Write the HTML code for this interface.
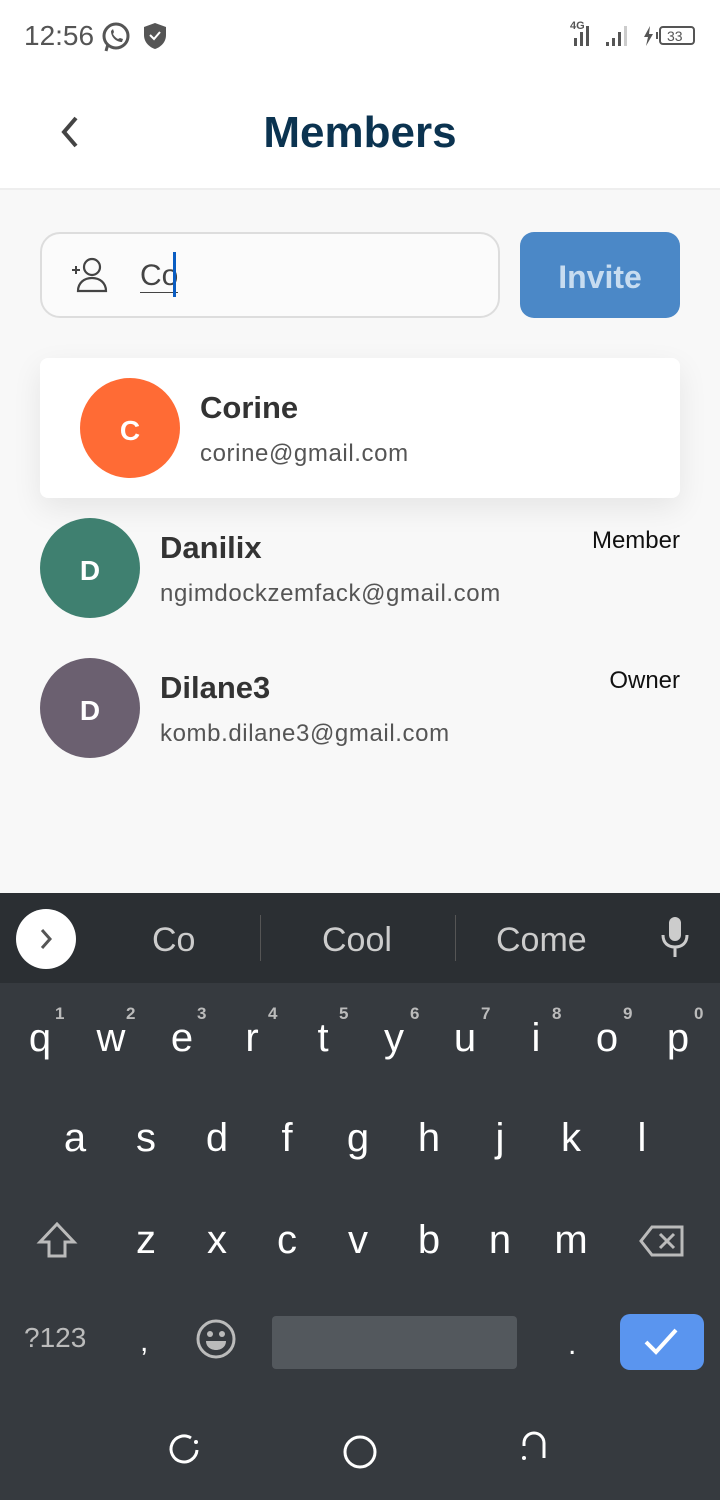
<!DOCTYPE html>
<html><head><meta charset="utf-8"><style>
*{margin:0;padding:0;box-sizing:border-box}
body{width:720px;height:1500px;position:relative;overflow:hidden;font-family:"Liberation Sans",sans-serif;background:#f8f8f8}
.a{position:absolute}
.kb{position:absolute;left:0;top:893px;width:720px;height:607px;background:#363a3f}
.sug{position:absolute;left:0;top:0;width:720px;height:90px;background:#2b2f33}
.k{position:absolute;color:#fff;font-size:40px;width:60px;text-align:center;transform:translateX(-30px);font-family:"Liberation Sans",sans-serif}
.n{position:absolute;color:#bbb;font-size:17px;font-weight:bold}
.av{position:absolute;width:100px;height:100px;border-radius:50%;color:#fff;font-weight:bold;font-size:28px;text-align:center;line-height:100px}
.nm{position:absolute;font-size:31px;font-weight:bold;color:#333}
.em{position:absolute;font-size:24px;color:#555;letter-spacing:0.6px}
</style></head><body>
<div class="a" style="left:0;top:0;width:720px;height:190px;background:#fff;border-bottom:2px solid #eee"></div>
<div class="a" style="left:24px;top:20px;font-size:28px;color:#555">12:56</div>
<svg class="a" style="left:100px;top:21px" width="32" height="32" viewBox="0 0 32 32"><circle cx="16" cy="15" r="12" fill="none" stroke="#555" stroke-width="3"/><path d="M6 30l2-7" stroke="#555" stroke-width="3"/><path d="M11 10c0 6 5 11 11 11l1-3-3-1-2 1c-2-1-4-3-5-5l1-2-1-3z" fill="#555"/></svg>
<svg class="a" style="left:142px;top:22px" width="26" height="28" viewBox="0 0 26 28"><path d="M13 1l11 4v8c0 7-5 12-11 14C7 25 2 20 2 13V5z" fill="#555"/><path d="M8 13l4 4 6-7" stroke="#fff" stroke-width="2" fill="none"/></svg>
<div class="a" style="left:570px;top:20px;font-size:11px;color:#555;font-weight:bold">4G</div>
<svg class="a" style="left:570px;top:24px" width="130" height="24" viewBox="0 0 130 24"><rect x="4" y="14" width="3" height="8" fill="#555"/><rect x="10" y="8" width="3" height="14" fill="#555"/><rect x="16" y="2" width="3" height="20" fill="#555"/><rect x="36" y="18" width="3" height="4" fill="#555"/><rect x="42" y="14" width="3" height="8" fill="#555"/><rect x="48" y="8" width="3" height="14" fill="#555"/><rect x="54" y="2" width="3" height="20" fill="#ccc"/><path d="M80 2l-6 11h4l-2 9 7-12h-4z" fill="#555"/><rect x="86" y="8" width="2" height="7" fill="#555"/><rect x="90" y="3" width="34" height="17" rx="3" fill="none" stroke="#555" stroke-width="2"/><text x="97" y="17" font-size="14" fill="#555" font-family="Liberation Sans">33</text></svg>
<svg class="a" style="left:58px;top:115px" width="24" height="34" viewBox="0 0 24 34"><path d="M18 3L6 17l12 14" stroke="#444" stroke-width="4" fill="none"/></svg>
<div class="a" style="left:0;width:720px;top:108px;text-align:center;font-size:44px;font-weight:bold;color:#0b3350">Members</div>
<div class="a" style="left:40px;top:232px;width:460px;height:86px;border:2px solid #ddd;border-radius:20px;background:#fbfbfb"></div>
<svg class="a" style="left:70px;top:255px" width="42" height="40" viewBox="0 0 42 40"><circle cx="22" cy="12" r="8" fill="none" stroke="#444" stroke-width="2.2"/><path d="M8 36c0-8 6-13 14-13s14 5 14 13z" fill="none" stroke="#444" stroke-width="2.2"/><path d="M2 15h8M6 11v8" stroke="#444" stroke-width="2"/></svg>
<div class="a" style="left:140px;top:260px;font-size:30px;color:#444;border-bottom:1.5px solid #444;line-height:32px">Co</div>
<div class="a" style="left:173px;top:252px;width:3px;height:45px;background:#0a5dc2"></div>
<div class="a" style="left:520px;top:232px;width:160px;height:86px;border-radius:14px;background:#4b88c7;color:#c7dcf0;font-size:32px;font-weight:bold;text-align:center;line-height:90px">Invite</div>
<div class="a" style="left:40px;top:358px;width:640px;height:140px;background:#fff;border-radius:8px;box-shadow:0 10px 30px rgba(0,0,0,0.08)"></div>
<div class="av" style="left:80px;top:378px;background:#ff6b35;line-height:106px">C</div>
<div class="nm" style="left:200px;top:390px">Corine</div>
<div class="em" style="left:200px;top:440px">corine@gmail.com</div>
<div class="av" style="left:40px;top:518px;background:#3f8070;line-height:106px">D</div>
<div class="nm" style="left:160px;top:530px">Danilix</div>
<div class="em" style="left:160px;top:580px">ngimdockzemfack@gmail.com</div>
<div class="a" style="right:40px;top:527px;font-size:24px;color:#111">Member</div>
<div class="av" style="left:40px;top:658px;background:#6b6070;line-height:106px">D</div>
<div class="nm" style="left:160px;top:670px">Dilane3</div>
<div class="em" style="left:160px;top:720px">komb.dilane3@gmail.com</div>
<div class="a" style="right:40px;top:667px;font-size:24px;color:#111">Owner</div>
<div class="kb">
<div class="sug">
<div class="a" style="left:16px;top:16px;width:60px;height:60px;border-radius:50%;background:#fff"></div>
<svg class="a" style="left:36px;top:34px" width="20" height="24"><path d="M6 3l8 9-8 9" stroke="#555" stroke-width="3" fill="none"/></svg>
<div class="a" style="left:152px;top:28px;font-size:34px;color:#ccc">Co</div>
<div class="a" style="left:260px;top:22px;width:1px;height:46px;background:#555"></div>
<div class="a" style="left:322px;top:28px;font-size:34px;color:#ccc">Cool</div>
<div class="a" style="left:455px;top:22px;width:1px;height:46px;background:#555"></div>
<div class="a" style="left:496px;top:28px;font-size:34px;color:#ccc">Come</div>
<svg class="a" style="left:660px;top:24px" width="30" height="42"><rect x="9" y="0" width="12" height="24" rx="6" fill="#ccc"/><path d="M3 18c0 8 5 12 12 12s12-4 12-12M15 30v10" stroke="#ccc" stroke-width="3" fill="none"/></svg>
</div>
</div>
<div class="a" style="left:0;top:1016px;width:720px;height:60px">
<div class="k" style="left:40px">q</div><div class="k" style="left:111px">w</div><div class="k" style="left:182px">e</div><div class="k" style="left:252px">r</div><div class="k" style="left:323px">t</div><div class="k" style="left:394px">y</div><div class="k" style="left:465px">u</div><div class="k" style="left:536px">i</div><div class="k" style="left:607px">o</div><div class="k" style="left:678px">p</div>
<div class="n" style="left:55px;top:-12px">1</div><div class="n" style="left:126px;top:-12px">2</div><div class="n" style="left:197px;top:-12px">3</div><div class="n" style="left:268px;top:-12px">4</div><div class="n" style="left:339px;top:-12px">5</div><div class="n" style="left:410px;top:-12px">6</div><div class="n" style="left:481px;top:-12px">7</div><div class="n" style="left:552px;top:-12px">8</div><div class="n" style="left:623px;top:-12px">9</div><div class="n" style="left:694px;top:-12px">0</div>
</div>
<div class="a" style="left:0;top:1116px;width:720px;height:60px">
<div class="k" style="left:75px">a</div><div class="k" style="left:146px">s</div><div class="k" style="left:217px">d</div><div class="k" style="left:287px">f</div><div class="k" style="left:358px">g</div><div class="k" style="left:429px">h</div><div class="k" style="left:500px">j</div><div class="k" style="left:571px">k</div><div class="k" style="left:642px">l</div>
</div>
<div class="a" style="left:0;top:1218px;width:720px;height:60px">
<svg class="a" style="left:36px;top:4px" width="42" height="38"><path d="M21 2L4 20h9v14h16V20h9z" fill="none" stroke="#bbb" stroke-width="3"/></svg>
<div class="k" style="left:146px">z</div><div class="k" style="left:217px">x</div><div class="k" style="left:287px">c</div><div class="k" style="left:358px">v</div><div class="k" style="left:429px">b</div><div class="k" style="left:500px">n</div><div class="k" style="left:571px">m</div>
<svg class="a" style="left:638px;top:6px" width="48" height="36"><path d="M14 3h30v28H14L3 17z" fill="none" stroke="#bbb" stroke-width="3"/><path d="M22 10l14 14M36 10L22 24" stroke="#bbb" stroke-width="3"/></svg>
</div>
<div class="a" style="left:24px;top:1322px;font-size:28px;color:#bbb">?123</div>
<div class="a" style="left:140px;top:1325px;font-size:30px;color:#fff">,</div>
<svg class="a" style="left:195px;top:1318px" width="42" height="42"><circle cx="21" cy="21" r="18" fill="none" stroke="#bbb" stroke-width="3"/><circle cx="15" cy="16" r="3" fill="#bbb"/><circle cx="27" cy="16" r="3" fill="#bbb"/><path d="M11 23h20c0 6-5 9-10 9s-10-3-10-9z" fill="#bbb"/></svg>
<div class="a" style="left:272px;top:1316px;width:245px;height:53px;background:#53585d;border-radius:4px"></div>
<div class="a" style="left:568px;top:1328px;font-size:30px;color:#fff">.</div>
<div class="a" style="left:620px;top:1314px;width:84px;height:56px;background:#5a95ef;border-radius:10px"></div>
<svg class="a" style="left:642px;top:1324px" width="40" height="36"><path d="M4 18l10 10L34 6" stroke="#fff" stroke-width="4" fill="none"/></svg>
<svg class="a" style="left:165px;top:1430px" width="40" height="40"><path d="M26 8a13 13 0 1 0 6 12" stroke="#fff" stroke-width="3" fill="none"/><circle cx="31" cy="12" r="2" fill="#fff"/></svg>
<svg class="a" style="left:340px;top:1432px" width="40" height="40"><circle cx="20" cy="20" r="15" stroke="#fff" stroke-width="3" fill="none"/></svg>
<svg class="a" style="left:518px;top:1428px" width="40" height="40"><path d="M6 18v-3a10 10 0 0 1 20 0v15" stroke="#fff" stroke-width="3" fill="none"/><circle cx="6" cy="30" r="2" fill="#fff"/></svg>
</body></html>
